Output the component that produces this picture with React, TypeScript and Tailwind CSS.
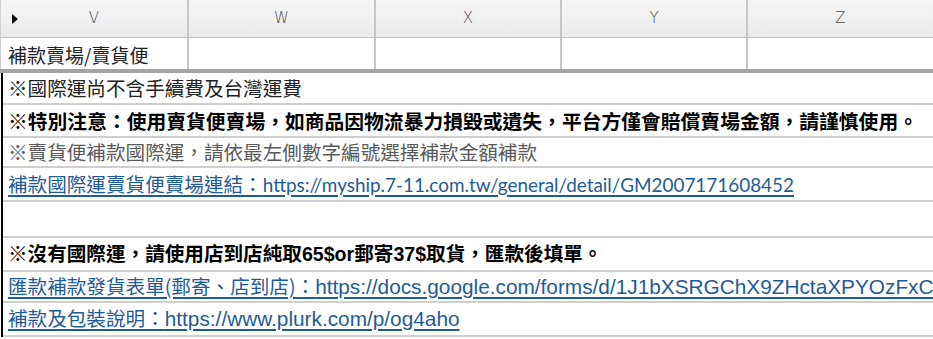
import React from "react";

const cjk = "'Noto Sans CJK TC', 'Noto Sans CJK SC', sans-serif";
const arial = "'Liberation Sans', " + cjk;

function Row({ h, children, className = "" }: { h: string; children?: React.ReactNode; className?: string }) {
  return (
    <div className={`flex items-center border-b-2 border-[#cfcfcf] pl-[5px] whitespace-nowrap overflow-hidden ${h} ${className}`}>
      {children}
    </div>
  );
}

export default function App() {
  const cols = ["V", "W", "X", "Y", "Z"];
  const widths = ["w-[189px]", "w-[187px]", "w-[186px]", "w-[186px]", "flex-1"];
  return (
    <div className="w-[933px] h-[339px] overflow-hidden bg-white" style={{ fontFamily: cjk }}>
      {/* header */}
      <div className="flex h-[38px] border-b border-[#bcbcbc] bg-gradient-to-b from-[#f6f6f6] to-[#eaeaea]">
        {cols.map((c, i) => (
          <div
            key={c}
            className={`${widths[i]} relative flex items-center justify-center ${i < 4 ? "border-r-2 border-[#c6c6c6]" : ""} ${i === 0 ? "border-l border-l-[#d0d0d0]" : ""}`}
          >
            {i === 0 && (
              <svg className="absolute left-[11px] top-[14px]" width="6" height="10" viewBox="0 0 6 10">
                <path d="M0 0 L6 5 L0 10 Z" fill="#111" />
              </svg>
            )}
            <span className="text-[15px] text-[#4a4a4a]" style={{ fontFamily: "'DejaVu Sans', sans-serif", fontWeight: 300 }}>{c}</span>
          </div>
        ))}
      </div>
      {/* row 2 */}
      <div className="flex h-[31px]">
        {cols.map((c, i) => (
          <div
            key={c}
            className={`${widths[i]} flex items-center ${i < 4 ? "border-r-2 border-[#c6c6c6]" : ""} ${i === 0 ? "border-l border-l-[#d0d0d0] pl-[7px]" : ""}`}
          >
            {i === 0 && <span className="text-[19px] text-[#222] leading-none mt-[2px]">補款賣場/賣貨便</span>}
          </div>
        ))}
      </div>
      <div className="h-[4px] bg-[#a4a4a4]" />
      {/* content */}
      <div className="border-l-2 border-black ml-[1px]">
        <Row h="h-[32px]">
          <span className="text-[19.6px] text-[#222] leading-none">※國際運尚不含手續費及台灣運費</span>
        </Row>
        <Row h="h-[33px]">
          <span className="text-[19.8px] font-bold text-black leading-none">※特別注意：使用賣貨便賣場，如商品因物流暴力損毀或遺失，平台方僅會賠償賣場金額，請謹慎使用。</span>
        </Row>
        <Row h="h-[30px]">
          <span className="text-[19.6px] text-[#5a5a5a] leading-none">※賣貨便補款國際運，請依最左側數字編號選擇補款金額補款</span>
        </Row>
        <Row h="h-[34px]">
          <span className="text-[19.6px] text-[#1f5c94] underline decoration-2 underline-offset-[3px] leading-none">
            補款國際運賣貨便賣場連結：
            <span className="text-[18.9px]" style={{ fontFamily: "Lato, " + cjk }}>https://myship.7-11.com.tw/general/detail/GM2007171608452</span>
          </span>
        </Row>
        <Row h="h-[36px]" />
        <Row h="h-[34px]">
          <span className="text-[19.6px] font-bold text-black leading-none">
            ※沒有國際運，請使用店到店純取<span style={{ fontFamily: arial }}>65$or</span>郵寄<span style={{ fontFamily: arial }}>37$</span>取貨，匯款後填單。
          </span>
        </Row>
        <Row h="h-[31px]">
          <span className="text-[19.6px] text-[#1f5c94] underline decoration-2 underline-offset-[3px] leading-none">
            匯款補款發貨表單(郵寄、店到店)：
            <span className="text-[20.8px]" style={{ fontFamily: arial }}>https://docs.google.com/forms/d/1J1bXSRGChX9ZHctaXPYOzFxC</span>
          </span>
        </Row>
        <Row h="h-[34px]">
          <span className="text-[19.6px] text-[#1f5c94] underline decoration-2 underline-offset-[3px] leading-none">
            補款及包裝說明：
            <span className="text-[20.8px]" style={{ fontFamily: arial }}>https://www.plurk.com/p/og4aho</span>
          </span>
        </Row>
      </div>
    </div>
  );
}
